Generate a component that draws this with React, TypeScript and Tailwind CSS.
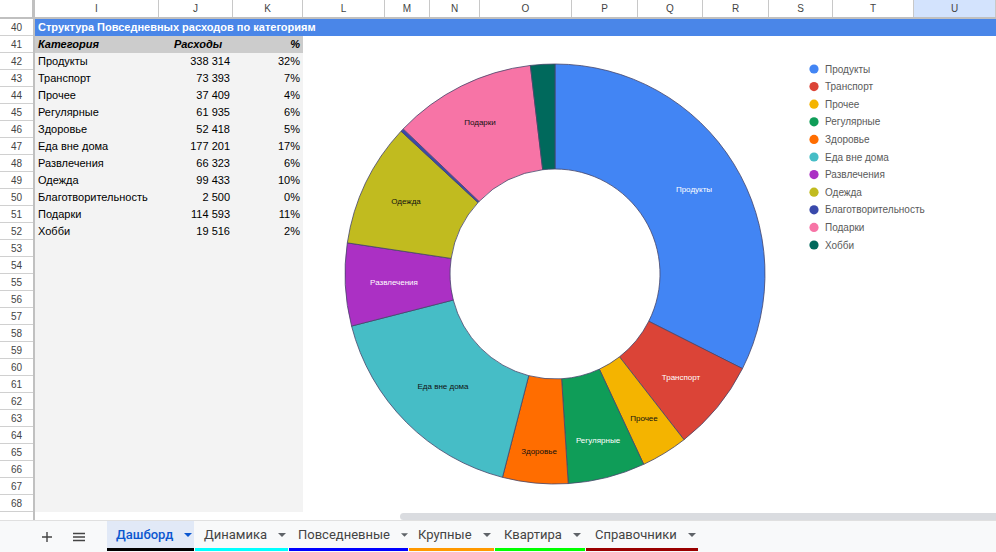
import React from 'react';

const columns = [
  { name: 'I', w: 124 },
  { name: 'J', w: 74 },
  { name: 'K', w: 70 },
  { name: 'L', w: 82 },
  { name: 'M', w: 45 },
  { name: 'N', w: 50 },
  { name: 'O', w: 92 },
  { name: 'P', w: 66 },
  { name: 'Q', w: 65 },
  { name: 'R', w: 66 },
  { name: 'S', w: 64 },
  { name: 'T', w: 81 },
  { name: 'U', w: 82 },
];

// lx/ly: label centre inside the chart box, as Sheets places them
const items = [
  { name: 'Продукты', value: 338314, pct: '32%', color: '#4285f4', label: 'white', lx: 391, ly: 153 },
  { name: 'Транспорт', value: 73393, pct: '7%', color: '#db4437', label: 'white', lx: 378, ly: 341 },
  { name: 'Прочее', value: 37409, pct: '4%', color: '#f4b400', label: 'black', lx: 341, ly: 382 },
  { name: 'Регулярные', value: 61935, pct: '6%', color: '#0f9d58', label: 'white', lx: 295, ly: 404 },
  { name: 'Здоровье', value: 52418, pct: '5%', color: '#ff6d00', label: 'black', lx: 236, ly: 415 },
  { name: 'Еда вне дома', value: 177201, pct: '17%', color: '#46bdc6', label: 'black', lx: 140, ly: 350 },
  { name: 'Развлечения', value: 66323, pct: '6%', color: '#ab30c4', label: 'white', lx: 91, ly: 246 },
  { name: 'Одежда', value: 99433, pct: '10%', color: '#c1bb1f', label: 'black', lx: 103, ly: 165 },
  { name: 'Благотворительность', value: 2500, pct: '0%', color: '#3949ab', label: '', lx: 0, ly: 0 },
  { name: 'Подарки', value: 114593, pct: '11%', color: '#f774a6', label: 'black', lx: 177, ly: 86 },
  { name: 'Хобби', value: 19516, pct: '2%', color: '#00695c', label: '', lx: 0, ly: 0 },
];

const tabs = [
  { name: 'Дашборд', w: 87, bar: '#000000', active: true },
  { name: 'Динамика', w: 93, bar: '#00ffff' },
  { name: 'Повседневные', w: 119, bar: '#0000ff' },
  { name: 'Крупные', w: 85, bar: '#ff9900' },
  { name: 'Квартира', w: 90, bar: '#00ff00' },
  { name: 'Справочники', w: 112, bar: '#990000' },
];

const fmt = (n: number) => n.toString().replace(/\B(?=(\d{3})+(?!\d))/g, ' ');

const rowNumbers = Array.from({ length: 29 }, (_, i) => 40 + i);

function arcPath(cx: number, cy: number, r: number, r0: number, a0: number, a1: number) {
  const p = (rad: number, a: number) => [cx + rad * Math.sin(a), cy - rad * Math.cos(a)];
  const large = a1 - a0 > Math.PI ? 1 : 0;
  const [x1, y1] = p(r, a0);
  const [x2, y2] = p(r, a1);
  const [x3, y3] = p(r0, a1);
  const [x4, y4] = p(r0, a0);
  return `M${x1} ${y1} A${r} ${r} 0 ${large} 1 ${x2} ${y2} L${x3} ${y3} A${r0} ${r0} 0 ${large} 0 ${x4} ${y4} Z`;
}

function DonutChart() {
  const total = items.reduce((s, i) => s + i.value, 0);
  const cx = 252;
  const cy = 238;
  const r = 210;
  const r0 = 105;
  let acc = 0;
  const slices = items.map(item => {
    const a0 = (acc / total) * Math.PI * 2;
    acc += item.value;
    const a1 = (acc / total) * Math.PI * 2;
    return { ...item, d: arcPath(cx, cy, r, r0, a0, a1) };
  });

  return (
    <svg width={693} height={475} className="block">
      {slices.map(s => (
        <path key={s.name} d={s.d} fill={s.color} stroke="#45456a" strokeWidth={0.8} />
      ))}
      {slices.map(s =>
        s.label ? (
          <text
            key={s.name + '-l'}
            x={s.lx}
            y={s.ly + 3}
            textAnchor="middle"
            fontSize={8}
            fill={s.label === 'white' ? '#ffffff' : '#111111'}
            fontFamily="'Liberation Sans', Arial, sans-serif"
          >
            {s.name}
          </text>
        ) : null
      )}
      {items.map((item, i) => (
        <g key={item.name + '-lg'}>
          <circle cx={511} cy={33 + i * 17.6} r={4.6} fill={item.color} />
          <text
            x={522}
            y={36.5 + i * 17.6}
            fontSize={10}
            fill="#5a5a5a"
            fontFamily="'Liberation Sans', Arial, sans-serif"
          >
            {item.name}
          </text>
        </g>
      ))}
    </svg>
  );
}

export default function App() {
  return (
    <div className="w-[996px] h-[552px] overflow-hidden bg-white flex flex-col font-['Liberation_Sans',Arial,sans-serif]">
      {/* column header */}
      <div className="flex h-[19px] border-b-2 border-[#c0c0c0] shrink-0">
        <div className="w-[35px] shrink-0 border-r-[3px] border-[#c0c0c0] bg-white" />
        {columns.map(c => (
          <div
            key={c.name}
            style={{ width: c.w }}
            className={`shrink-0 flex items-center justify-center text-[10px] text-[#444] border-r border-[#c8c8c8] ${
              c.name === 'U' ? 'bg-[#d3e3fd]' : 'bg-white'
            }`}
          >
            {c.name}
          </div>
        ))}
      </div>

      {/* grid body */}
      <div className="flex shrink-0">
        <div className="w-[35px] shrink-0 border-r-2 border-[#c0c0c0]">
          {rowNumbers.map(n => (
            <div
              key={n}
              className="h-[17px] border-b border-[#d0d0d0] flex items-center justify-center text-[10px] text-[#444]"
            >
              {n}
            </div>
          ))}
        </div>
        <div className="relative flex-1">
          <div className="h-[17px] bg-[#4a86e8] flex items-center pl-[3px] text-[11px] font-bold text-white">
            Структура Повседневных расходов по категориям
          </div>
          <div className="w-[268px] bg-[#f3f3f3] h-[476px] text-[11px] text-black">
            <div className="h-[17px] bg-[#cccccc] flex items-center italic font-bold">
              <div className="w-[124px] pl-[3px]">Категория</div>
              <div className="w-[74px] text-center pl-[4px]">Расходы</div>
              <div className="w-[70px] text-right pr-[3px]">%</div>
            </div>
            {items.map(item => (
              <div key={item.name} className="h-[17px] flex items-center">
                <div className="w-[124px] pl-[3px] whitespace-nowrap">{item.name}</div>
                <div className="w-[74px] text-right pr-[3px]">{fmt(item.value)}</div>
                <div className="w-[70px] text-right pr-[3px]">{item.pct}</div>
              </div>
            ))}
          </div>
          <div className="absolute left-[268px] top-[17px] bg-white">
            <DonutChart />
          </div>
        </div>
      </div>

      {/* horizontal scroll strip */}
      <div className="flex h-[9px] shrink-0 border-b border-[#e0e0e0]">
        <div className="w-[35px] border-r-2 border-[#c0c0c0]" />
        <div className="flex-1 pl-[365px] pt-[1px]">
          <div className="h-[7px] bg-[#dadce0] rounded-l-full" />
        </div>
      </div>

      {/* sheet tabs */}
      <div className="flex-1 bg-[#f8f9fa] flex items-stretch font-['Roboto',sans-serif]">
        <div className="w-[107px] flex items-center pl-[40px] gap-[18px] text-[#444]">
          <svg width={14} height={14} viewBox="0 0 14 14">
            <path d="M7 2v10M2 7h10" stroke="#444" strokeWidth={1.4} />
          </svg>
          <svg width={14} height={14} viewBox="0 0 14 14">
            <path d="M1 3.5h12M1 7h12M1 10.5h12" stroke="#444" strokeWidth={1.3} />
          </svg>
        </div>
        {tabs.map(t => (
          <div key={t.name} style={{ width: t.w }} className="flex flex-col shrink-0 mr-[1px]">
            <div
              className={`flex-1 flex items-center pl-[9px] gap-[11px] text-[13px] ${
                t.active ? 'bg-[#e1e9f7] text-[#0b57d0] font-medium' : 'text-[#444]'
              }`}
            >
              <span>{t.name}</span>
              <svg width={8} height={4} viewBox="0 0 8 4">
                <path d="M0 0h8L4 4z" fill={t.active ? '#0b57d0' : '#5f6368'} />
              </svg>
            </div>
            <div style={{ backgroundColor: t.bar }} className="h-[3px] mb-[1px]" />
          </div>
        ))}
      </div>
    </div>
  );
}
